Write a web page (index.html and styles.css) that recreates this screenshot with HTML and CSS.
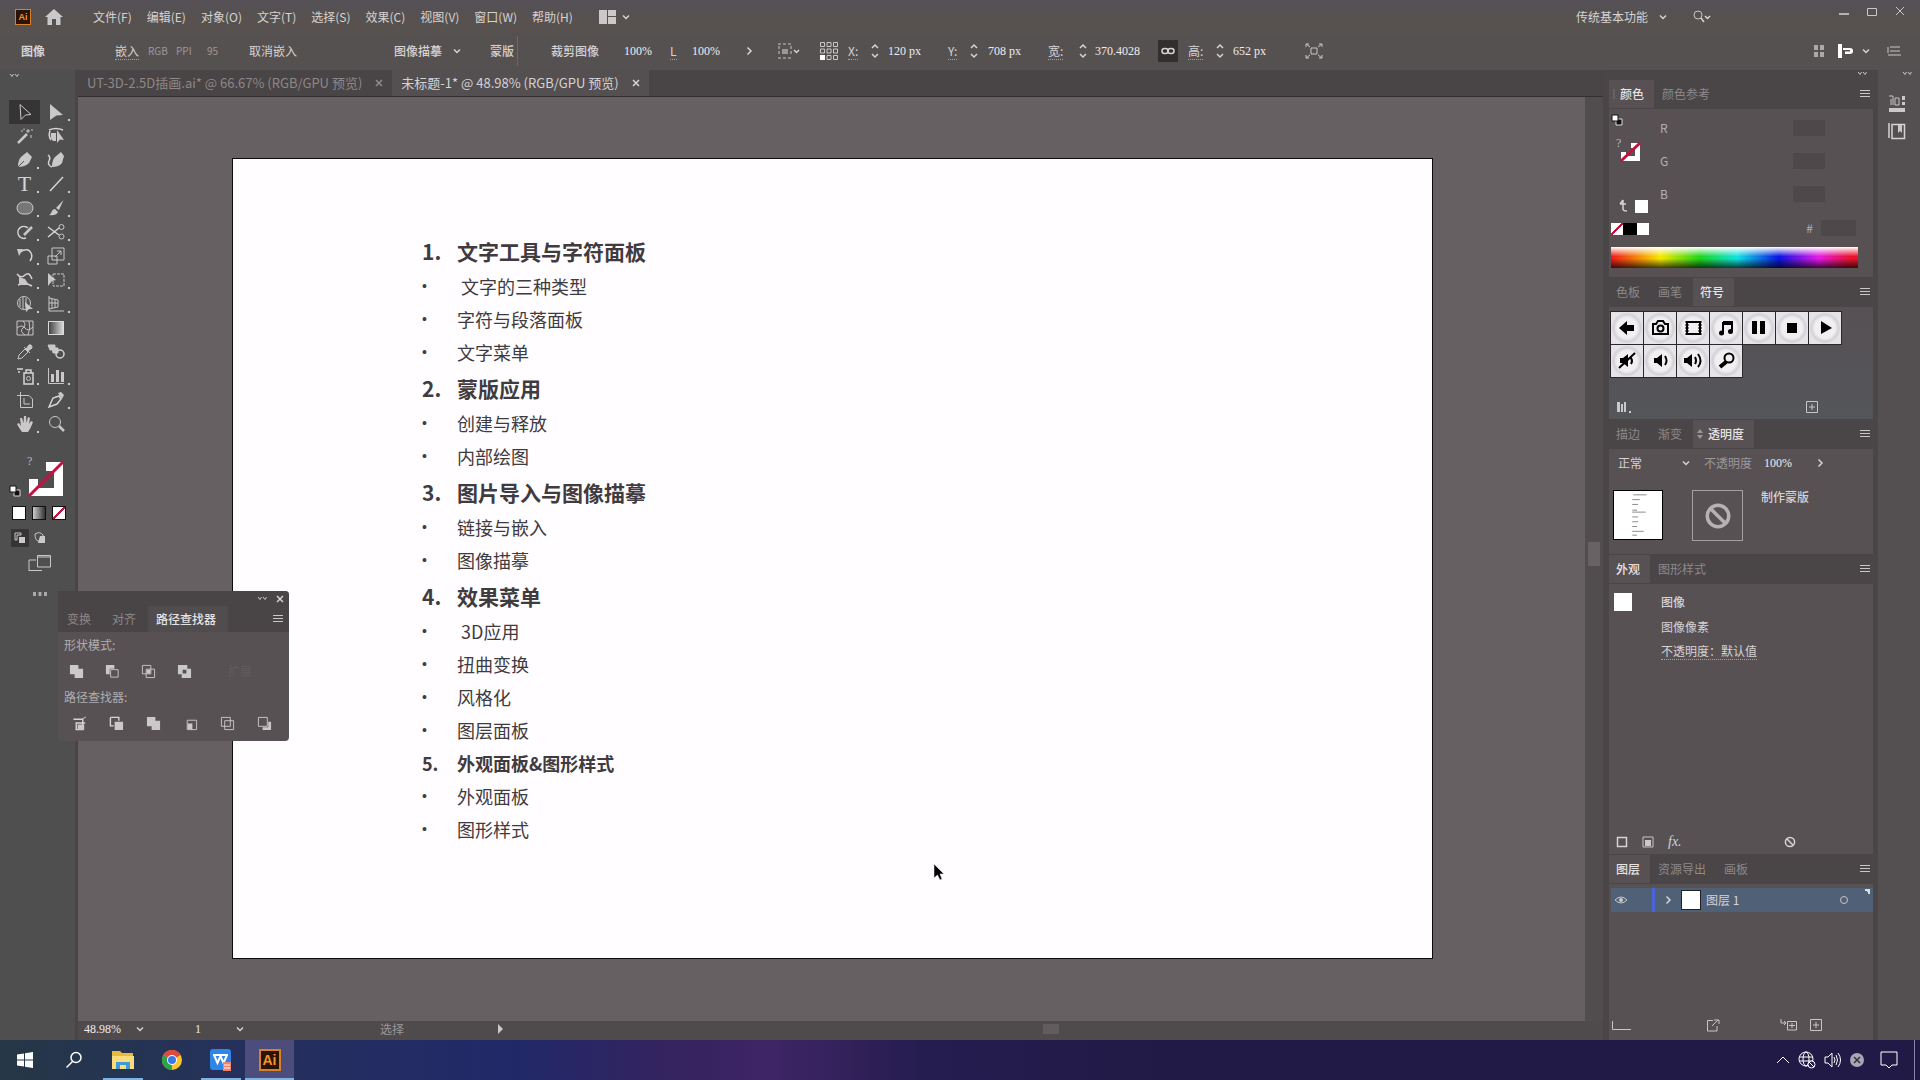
FILE: index.html
```html
<!DOCTYPE html>
<html lang="zh-CN">
<head>
<meta charset="utf-8">
<title>未标题-1* @ 48.98% (RGB/GPU 预览)</title>
<meta name="viewport" content="width=device-width, initial-scale=1">
<link rel="stylesheet" href="styles.css">
</head>
<body>
<svg class="defs" aria-hidden="true">
  <symbol id="chev" viewBox="0 0 10 10"><path d="M2 3.5 5 6.5 8 3.5" class="ln2"/></symbol>
  <symbol id="next" viewBox="0 0 10 10"><path d="M3.5 1.5 7 5 3.5 8.5" class="ln2"/></symbol>
  <symbol id="spin" viewBox="0 0 10 16"><path d="M2 5 5 2 8 5M2 11 5 14 8 11" class="ln2"/></symbol>
  <symbol id="grip" viewBox="0 0 6 10"><path d="M0 4 3 0 6 4ZM0 6 3 10 6 6Z" fill="#9a9596"/></symbol>
  <symbol id="lines" viewBox="0 0 12 12"><path d="M1 2.5H11M1 5.5H11M1 8.5H11" class="ln"/></symbol>
  <symbol id="close" viewBox="0 0 10 10"><path d="M2 2 8 8M8 2 2 8" class="ln2"/></symbol>
  <symbol id="collapse" viewBox="0 0 10 8"><path d="M1 2 3 4.5 4.5 2M6 2 8 4.5 9.5 2" class="ln"/></symbol>
  <symbol id="plusbox" viewBox="0 0 12 12"><path d="M.5.5H11.5V11.5H.5ZM6 3V9M3 6H9" class="ln"/></symbol>
  <symbol id="forbid" viewBox="0 0 12 12"><circle cx="6" cy="6" r="4.6" class="ln2"/><path d="M2.8 2.8 9.2 9.2" class="ln2"/></symbol>
  <symbol id="default" viewBox="0 0 12 12"><path d="M5 5H11V11H5Z" fill="#111" stroke="#ddd"/><path d="M1 1H7V7H1Z" fill="#fff" stroke="#111"/></symbol>

  <symbol id="t-select" viewBox="0 0 18 18"><path d="M4 1.5 15 11.5 9.5 12 5 16.5Z" class="ln"/></symbol>
  <symbol id="t-direct" viewBox="0 0 18 18"><path d="M3 1 16 12 9.5 12.500 3 17Z" class="fl"/></symbol>
  <symbol id="t-wand" viewBox="0 0 18 18"><path d="M2 16 11 7" class="ln3"/><path d="M12 2V6M10 4H14M6 3V5M15 8V11M8 1.500V3M16 2V4" class="ln"/></symbol>
  <symbol id="t-lasso" viewBox="0 0 18 18"><path d="M2 3Q9 0 16 3M3 4Q1 9 4 13" class="ln2"/><path d="M4 6H9V14H6Q3 11 4 6Z" class="fl"/><path d="M10 3 17 13 13 12.500 10 16Z" class="fl"/></symbol>
  <symbol id="t-pen" viewBox="0 0 18 18"><path d="M2 16Q2 9 5 6L11 1 16 6 13 12Q9 16 2 16Z" class="fl"/><path d="M2 16 8 10" stroke="#555"/></symbol>
  <symbol id="t-curve" viewBox="0 0 18 18"><path d="M5 16Q5 9 8 6L14 1 17 5 15 12Q12 16 5 16Z" class="fl"/><path d="M1 4Q4 6 2 10T5 16" class="ln2"/></symbol>
  <symbol id="t-line" viewBox="0 0 18 18"><path d="M3 16 16 2" class="ln2"/></symbol>
  <symbol id="t-ellipse" viewBox="0 0 18 18"><rect x="1" y="3" width="16" height="12" rx="6" fill="#777" stroke="#ccc"/></symbol>
  <symbol id="t-brush" viewBox="0 0 18 18"><path d="M16.500 1 12 11 9 9ZM8 10 11 13Q9 17 2 16 4 15 5 12 6 10 8 10Z" class="fl"/></symbol>
  <symbol id="t-shaper" viewBox="0 0 18 18"><path d="M10 15A6 6 0 1 1 12 5" class="ln2"/><path d="M8 12 16 4" class="ln3"/></symbol>
  <symbol id="t-scissors" viewBox="0 0 18 18"><path d="M1 4 12 12M1 14 12 5" class="ln2"/><circle cx="14.500" cy="4" r="2.500" class="ln"/><circle cx="14.500" cy="13.500" r="2.500" class="ln"/></symbol>
  <symbol id="t-rotate" viewBox="0 0 18 18"><path d="M4 5Q12 0 15 6 17 10 14 14" class="ln2"/><path d="M1 2 7 2 3 9Z" class="fl"/></symbol>
  <symbol id="t-scale" viewBox="0 0 18 18"><path d="M5 1H17V13H5ZM1 9H10V17H1ZM8 10 14 4M10 4H14V8" class="ln"/></symbol>
  <symbol id="t-width" viewBox="0 0 18 18"><path d="M1 3Q5 8 9 4T16 8M2 14Q9 11 16 15" class="ln2"/><path d="M3 6 9 8 13 14 3 14Z" class="fl"/></symbol>
  <symbol id="t-free" viewBox="0 0 18 18"><path d="M6 3H17V15H6Z" class="ln" stroke-dasharray="3 1"/><path d="M1 2 9 9 5 10 1 15Z" class="fl"/></symbol>
  <symbol id="t-builder" viewBox="0 0 18 18"><circle cx="8" cy="8" r="6.500" class="ln"/><path d="M4 4V12M7 2V14M10 3V12" class="ln"/><path d="M9 7 17 14 13 14 10 17Z" class="fl"/></symbol>
  <symbol id="t-persp" viewBox="0 0 18 18"><path d="M2 1V16H17M2 3 11 5V12L2 14M5 4V13M8 4V13M2 8H11" class="ln"/></symbol>
  <symbol id="t-mesh" viewBox="0 0 18 18"><path d="M1 2H17V16H1ZM1 9Q6 5 9 9T17 8M7 2Q11 6 7 9T9 16M13 2Q15 9 12 16" class="ln"/></symbol>
  <linearGradient id="grad"><stop offset="0" stop-color="#3f3f3f"/><stop offset="1" stop-color="#ddd"/></linearGradient>
  <symbol id="t-gradient" viewBox="0 0 18 18"><path d="M1.500 2.500H16.500V15.500H1.500Z" fill="url(#grad)" stroke="#ddd"/></symbol>
  <symbol id="t-eyedrop" viewBox="0 0 18 18"><path d="M2 16 3 12 9 6 12 9 6 15Z" class="ln"/><path d="M8 4 14 10M10 6 13 2Q16 1 16 5L12 8Z" class="lf"/></symbol>
  <symbol id="t-blend" viewBox="0 0 18 18"><path d="M1 2H8V7H3ZM5 5H11V10H6Z" class="lf"/><circle cx="13" cy="11" r="4" class="ln2"/></symbol>
  <symbol id="t-spray" viewBox="0 0 18 18"><path d="M8 6H17V17H8ZM10 6V3H15V6M1 2H7M2 5H4" class="ln2"/><circle cx="12.500" cy="11.500" r="2" class="ln"/></symbol>
  <symbol id="t-graph" viewBox="0 0 18 18"><path d="M1.500 1V16.500H17" class="ln"/><path d="M4 7H7V15H4ZM9 3H12V15H9ZM14 5H17V15H14Z" class="fl"/></symbol>
  <symbol id="t-artboard" viewBox="0 0 18 18"><path d="M4.500 1V16.500H16.500V8L13 4.500H1M8 7V13M8 13H14" class="ln"/></symbol>
  <symbol id="t-slice" viewBox="0 0 18 18"><path d="M2 16 6 7 12 5 14 8 10 13Z" class="ln2"/><path d="M11 2 14 1 17 4 15 8Z" class="fl"/></symbol>
  <symbol id="t-hand" viewBox="0 0 18 18"><path d="M6 17Q3 13 1 9L3 8 5 11 4 3H6L7.500 8 8 1H10L10.500 8 12 2 14 3 13 9 15 6 17 7Q15 13 12 17Z" class="fl"/></symbol>
  <symbol id="t-zoom" viewBox="0 0 18 18"><circle cx="8" cy="7" r="5.500" class="ln"/><path d="M12 11 17 16" class="ln3"/></symbol>

  <symbol id="p-unite" viewBox="0 0 16 16"><path d="M1 1H10V5H15V15H6V11H1Z" class="fl"/></symbol>
  <symbol id="p-minus" viewBox="0 0 16 16"><path d="M1 1H10V5H5V11H1Z" class="fl"/><path d="M6 6H14V14H6Z" class="ln"/></symbol>
  <symbol id="p-inter" viewBox="0 0 16 16"><path d="M1.500 1.500H10.500V10.500H1.500ZM5.500 5.500H14.500V14.500H5.500Z" class="ln"/><path d="M6 6H10V10H6Z" class="fl"/></symbol>
  <symbol id="p-excl" viewBox="0 0 16 16"><path d="M1 1H11V5H15V15H5V11H1ZM6 6V10H10V6Z" fill-rule="evenodd" class="fl"/></symbol>
  <symbol id="p-divide" viewBox="0 0 16 16"><path d="M1.500 3.500H11.500V14.500H4.500V7.500H14" class="ln2"/><path d="M6 9H13V15H6Z" class="fl"/><path d="M11 3 15 1" class="ln"/></symbol>
  <symbol id="p-trim" viewBox="0 0 16 16"><path d="M1.500 1.500H10.500V5M1.500 1.500V10.500H5" class="ln2"/><path d="M6 6H15V15H6Z" class="fl"/></symbol>
  <symbol id="p-crop" viewBox="0 0 16 16"><path d="M4.500 4.500H14.500V14.500H4.500Z" class="ln"/><path d="M5 8H10V14H5Z" class="fl"/></symbol>
  <symbol id="p-outline" viewBox="0 0 16 16"><path d="M1.500 1.500H11V11H1.500ZM5 5H14.500V14.500H5Z" class="ln"/></symbol>
  <symbol id="p-back" viewBox="0 0 16 16"><path d="M1.500 1.500H11V11H1.500Z" class="ln"/><path d="M12 6H15V15H6V12H12Z" class="fl"/></symbol>
</svg>

<div class="app">
  <header class="menubar">
    <span class="ai-logo small">Ai</span>
    <button class="plain home" aria-label="主页"><svg width="18" height="16" viewBox="0 0 18 16"><path d="M9 0 18 8H15.500V16H11V10H7V16H2.500V8H0Z" class="fl"/></svg></button>
    <nav class="menus">
      <button class="plain">文件(F)</button><button class="plain">编辑(E)</button><button class="plain">对象(O)</button><button class="plain">文字(T)</button><button class="plain">选择(S)</button><button class="plain">效果(C)</button><button class="plain">视图(V)</button><button class="plain">窗口(W)</button><button class="plain">帮助(H)</button>
    </nav>
    <button class="plain arrange" aria-label="排列文档"><svg width="17" height="14" viewBox="0 0 17 14"><path d="M0 0H8V14H0ZM9 0H17V6H9ZM9 7H17V14H9Z" class="fl"/></svg><svg width="10" height="10"><use href="#chev"/></svg></button>
    <button class="plain workspace">传统基本功能<svg width="10" height="10"><use href="#chev"/></svg></button>
    <button class="plain search" aria-label="搜索"><svg width="20" height="14" viewBox="0 0 20 14"><circle cx="6" cy="5" r="4" class="ln"/><path d="M9 8 12 12M13 6 15.500 8.500 18 6" class="ln2"/></svg></button>
    <div class="winctl">
      <button class="plain" aria-label="最小化"><svg width="12" height="12" viewBox="0 0 12 12"><path d="M1 8H11" class="ln2"/></svg></button>
      <button class="plain" aria-label="还原"><svg width="12" height="12" viewBox="0 0 12 12"><path d="M1.500 2.500H10.500V9.500H1.500Z" class="ln"/></svg></button>
      <button class="plain" aria-label="关闭"><svg width="12" height="12" viewBox="0 0 12 12"><path d="M2 1 10 9M10 1 2 9" class="ln"/></svg></button>
    </div>
  </header>

  <div class="options">
    <b>图像</b>
    <a href="#" class="dotted">嵌入</a>
    <span class="dim meta">RGB</span>
    <span class="dim meta">PPI</span>
    <span class="dim meta">95</span>
    <button class="plain">取消嵌入</button>
    <button class="plain strong">图像描摹</button>
    <button class="plain" aria-label="描摹预设"><svg width="10" height="10"><use href="#chev"/></svg></button>
    <button class="plain strong">蒙版</button>
    <span class="divider"></span>
    <button class="plain strong">裁剪图像</button>
    <input class="num" aria-label="缩放" value="100%">
    <label class="dotted" for="op">L</label>
    <input class="num" id="op" value="100%">
    <button class="plain" aria-label="更多"><svg width="10" height="10"><use href="#next"/></svg></button>
    <button class="plain" aria-label="对齐"><svg width="24" height="18" viewBox="0 0 24 18"><path d="M1 2H15M1 16H15M2 4V14M14 4V14" class="ln" stroke-dasharray="3 2"/><path d="M5 7H11V12H5Z" fill="#999"/><path d="M17 8 19.500 10.500 22 8" class="ln2"/></svg></button>
    <button class="plain" aria-label="参考点"><svg width="20" height="20" viewBox="0 0 20 20"><path d="M1.500 1.500H5.500V5.500H1.500ZM8 1.500H12V5.500H8ZM14.500 1.500H18.500V5.500H14.500ZM1.500 8H5.500V12H1.500ZM8 8H12V12H8ZM14.500 8H18.500V12H14.500ZM8 14.500H12V18.500H8ZM14.500 14.500H18.500V18.500H14.500Z" class="ln"/><path d="M1 14H6V19H1Z" fill="#fff"/></svg></button>
    <label class="dotted" for="px">X:</label>
    <svg width="10" height="16"><use href="#spin"/></svg>
    <input class="num" id="px" value="120 px">
    <label class="dotted" for="py">Y:</label>
    <svg width="10" height="16"><use href="#spin"/></svg>
    <input class="num" id="py" value="708 px">
    <label class="dotted" for="pw">宽:</label>
    <svg width="10" height="16"><use href="#spin"/></svg>
    <input class="num" id="pw" value="370.4028">
    <button class="plain link" aria-label="约束比例"><svg width="14" height="8" viewBox="0 0 14 8"><rect x="1" y="1.500" width="6" height="5" rx="2.500" class="ln2"/><rect x="7" y="1.500" width="6" height="5" rx="2.500" class="ln2"/></svg></button>
    <label class="dotted" for="ph">高:</label>
    <svg width="10" height="16"><use href="#spin"/></svg>
    <input class="num" id="ph" value="652 px">
    <button class="plain" aria-label="隔离"><svg width="18" height="16" viewBox="0 0 18 16"><path d="M6 5H12V11H6ZM1 4V1H4M1 1 5 4M14 1H17V4M17 1 13 4M1 12V15H4M1 15 5 12M14 15H17V12M17 15 13 12" class="ln"/></svg></button>
    <button class="plain" aria-label="网格"><svg width="12" height="14" viewBox="0 0 12 14"><path d="M1 1H5V6H1ZM7 1H11V6H7ZM1 8H5V13H1ZM7 8H11V13H7Z" fill="#aaa"/></svg></button>
    <button class="plain" aria-label="停靠"><svg width="17" height="16" viewBox="0 0 17 16"><path d="M1 1H5V15H1ZM6 5H13Q16 5 16 8T13 11H8V8.500H13V7H6Z" fill="#fff"/></svg></button>
    <button class="plain" aria-label="展开"><svg width="10" height="10"><use href="#chev"/></svg></button>
    <button class="plain" aria-label="面板菜单"><svg width="14" height="12" viewBox="0 0 14 12"><path d="M3 2H13M3 6H13M1 10H14M1 2V8" class="ln"/></svg></button>
  </div>

  <main class="main">
    <aside class="toolbar">
      <svg class="tool-collapse" width="10" height="8"><use href="#collapse"/></svg>
      <div class="tools">
        <button class="plain on" aria-label="选择"><svg><use href="#t-select"/></svg></button><button class="plain more" aria-label="直接选择"><svg><use href="#t-direct"/></svg></button>
        <button class="plain" aria-label="魔棒"><svg><use href="#t-wand"/></svg></button><button class="plain" aria-label="套索"><svg><use href="#t-lasso"/></svg></button>
        <button class="plain more" aria-label="钢笔"><svg><use href="#t-pen"/></svg></button><button class="plain" aria-label="曲率"><svg><use href="#t-curve"/></svg></button>
        <button class="plain more type">T</button><button class="plain more" aria-label="直线段"><svg><use href="#t-line"/></svg></button>
        <button class="plain more" aria-label="椭圆"><svg><use href="#t-ellipse"/></svg></button><button class="plain more" aria-label="画笔"><svg><use href="#t-brush"/></svg></button>
        <button class="plain more" aria-label="整形"><svg><use href="#t-shaper"/></svg></button><button class="plain more" aria-label="剪刀"><svg><use href="#t-scissors"/></svg></button>
        <button class="plain more" aria-label="旋转"><svg><use href="#t-rotate"/></svg></button><button class="plain more" aria-label="比例缩放"><svg><use href="#t-scale"/></svg></button>
        <button class="plain more" aria-label="宽度"><svg><use href="#t-width"/></svg></button><button class="plain more" aria-label="自由变换"><svg><use href="#t-free"/></svg></button>
        <button class="plain more" aria-label="形状生成器"><svg><use href="#t-builder"/></svg></button><button class="plain more" aria-label="透视网格"><svg><use href="#t-persp"/></svg></button>
        <button class="plain" aria-label="网格"><svg><use href="#t-mesh"/></svg></button><button class="plain" aria-label="渐变"><svg><use href="#t-gradient"/></svg></button>
        <button class="plain more" aria-label="吸管"><svg><use href="#t-eyedrop"/></svg></button><button class="plain" aria-label="混合"><svg><use href="#t-blend"/></svg></button>
        <button class="plain more" aria-label="符号喷枪"><svg><use href="#t-spray"/></svg></button><button class="plain more" aria-label="柱形图"><svg><use href="#t-graph"/></svg></button>
        <button class="plain" aria-label="画板"><svg><use href="#t-artboard"/></svg></button><button class="plain more" aria-label="切片"><svg><use href="#t-slice"/></svg></button>
        <button class="plain more" aria-label="抓手"><svg><use href="#t-hand"/></svg></button><button class="plain" aria-label="缩放"><svg><use href="#t-zoom"/></svg></button>
      </div>
      <div class="fillstroke">
        <svg width="12" height="12"><use href="#default"/></svg>
        <svg width="38" height="44" viewBox="0 -2 38 44"><path d="M19 7H36V41H2V24H11V33H27V16H19Z" fill="#fff"/><path d="M2 41 36 7" stroke="#c3123f" stroke-width="3"/><text x="0" y="10" class="q">?</text></svg>
      </div>
      <div class="modes">
        <button class="plain sw white" aria-label="颜色"></button><button class="plain sw grad" aria-label="渐变"></button><button class="plain sw none" aria-label="无"></button>
      </div>
      <div class="draw">
        <button class="plain on" aria-label="正常绘图"><svg width="12" height="12" viewBox="0 0 12 12"><path d="M1 1H7V3H3V8H1Z" class="ln"/><path d="M5 5H11V11H5Z" class="fl"/></svg></button>
        <button class="plain" aria-label="背面绘图"><svg width="12" height="12" viewBox="0 0 12 12"><path d="M1 2Q6-1 9 3V9H4Q1 8 1 2Z" class="ln"/><path d="M6 4H11V11H4Z" class="fl"/></svg></button>
      </div>
      <button class="plain screen" aria-label="屏幕模式"><svg width="24" height="18" viewBox="0 0 24 18"><path d="M1 17V6H8M1 16.500H14M9.500 1.500H22.500V13H9.500ZM9.500 3H22.500" class="ln"/></svg></button>
      <button class="plain dots" aria-label="编辑工具栏"><svg width="16" height="4" viewBox="0 0 16 4"><path d="M1 0H4V4H1ZM6.500 0H9.500V4H6.500ZM12 0H15V4H12Z" fill="#aaa"/></svg></button>
    </aside>

    <section class="document">
      <div class="doctabs">
        <div class="doctab">UT-3D-2.5D插画.ai* @ 66.67% (RGB/GPU 预览)<button class="plain" aria-label="关闭标签"><svg width="10" height="10"><use href="#close"/></svg></button></div>
        <div class="doctab current">未标题-1* @ 48.98% (RGB/GPU 预览)<button class="plain" aria-label="关闭标签"><svg width="10" height="10"><use href="#close"/></svg></button></div>
      </div>
      <div class="view">
        <div class="canvas">
          <article class="artboard">
            <ul class="outline">
              <li class="head"><span>1.</span>文字工具与字符面板</li>
              <li><span>•</span> 文字的三种类型</li>
              <li><span>•</span>字符与段落面板</li>
              <li><span>•</span>文字菜单</li>
              <li class="head"><span>2.</span>蒙版应用</li>
              <li><span>•</span>创建与释放</li>
              <li><span>•</span>内部绘图</li>
              <li class="head"><span>3.</span>图片导入与图像描摹</li>
              <li><span>•</span>链接与嵌入</li>
              <li><span>•</span>图像描摹</li>
              <li class="head"><span>4.</span>效果菜单</li>
              <li><span>•</span> 3D应用</li>
              <li><span>•</span>扭曲变换</li>
              <li><span>•</span>风格化</li>
              <li><span>•</span>图层面板</li>
              <li class="subhead"><span>5.</span>外观面板&amp;图形样式</li>
              <li><span>•</span>外观面板</li>
              <li><span>•</span>图形样式</li>
            </ul>
          </article>
          <svg class="cursor" width="12" height="18" viewBox="0 0 12 18"><path d="M1 1V15L4.500 12 7 17 9 16 7 11H11Z" fill="#000" stroke="#fff" stroke-width=".5"/></svg>
        </div>
        <div class="vscroll"><span></span></div>
      </div>
      <div class="status">
        <input class="num" aria-label="显示比例" value="48.98%">
        <svg width="10" height="10"><use href="#chev"/></svg>
        <input class="num" aria-label="画板编号" value="1">
        <svg width="10" height="10"><use href="#chev"/></svg>
        <span class="dim">选择</span>
        <svg width="8" height="10" viewBox="0 0 8 10"><path d="M1 0 6 5 1 10Z" class="fl"/></svg>
        <div class="hscroll"><span></span></div>
      </div>
    </section>

    <aside class="dock">
      <div class="docktop"><svg width="10" height="8"><use href="#collapse"/></svg></div>

      <div class="ptabs"><button class="plain cur grip"><svg width="2" height="10" viewBox="0 0 2 10"><path d="M1 0V10" stroke="#777"/></svg>颜色</button><button class="plain">颜色参考</button><svg width="12" height="12"><use href="#lines"/></svg></div>
      <div class="color">
        <div class="colorcols">
          <div class="cleft">
            <div class="c1"><svg width="12" height="12"><use href="#default"/></svg></div>
            <div class="c2"><svg width="36" height="36" viewBox="0 -5 36 36"><path d="M20 4H29V22H10V13H15V17H24V9H20Z" fill="#fff"/><path d="M10 22 29 4" stroke="#c3123f" stroke-width="3"/><text x="5" y="8" class="q">?</text></svg></div>
            <div class="c3"><svg width="14" height="14" viewBox="0 0 14 14"><path d="M6 1V10Q6 12 10 12M3 5H9M3 5 6 1" class="ln2"/></svg><i class="wsw"></i></div>
            <div class="c4"><i class="none"></i><i class="black"></i><i class="white"></i></div>
          </div>
          <div class="cright">
            <label>R<input class="cnum"></label>
            <label>G<input class="cnum"></label>
            <label>B<input class="cnum"></label>
            <label class="hex">#<input class="cnum"></label>
          </div>
        </div>
        <div class="spectrum"></div>
      </div>

      <div class="ptabs"><button class="plain">色板</button><button class="plain">画笔</button><button class="plain cur">符号</button><svg width="12" height="12"><use href="#lines"/></svg></div>
      <div class="symbols">
        <div class="symgrid">
          <button aria-label="后退"><svg viewBox="0 0 32 32"><path d="M8 16 16 9V13H23V19H16V23Z"/></svg></button>
          <button aria-label="相机"><svg viewBox="0 0 32 32"><path d="M9 12H12L14 9H19L21 12H24V22H9Z" class="sk"/><circle cx="16.500" cy="16.500" r="3" class="sk"/></svg></button>
          <button aria-label="影片"><svg viewBox="0 0 32 32"><path d="M10 10H23V22H10Z" class="sk"/><path d="M10 9V23M23 9V23" stroke="#000" stroke-width="3" stroke-dasharray="2 1"/></svg></button>
          <button aria-label="音乐"><svg viewBox="0 0 32 32"><path d="M13 21V11H22V19" class="sk"/><path d="M13 9H23V13H13Z"/><circle cx="11.500" cy="21" r="2.500"/><circle cx="20.500" cy="19.500" r="2.500"/></svg></button>
          <button aria-label="暂停"><svg viewBox="0 0 32 32"><path d="M9 9H14V22H9ZM17 9H22V22H17Z"/></svg></button>
          <button aria-label="停止"><svg viewBox="0 0 32 32"><path d="M11 11H21V21H11Z"/></svg></button>
          <button aria-label="播放"><svg viewBox="0 0 32 32"><path d="M12 9 23 16 12 22Z"/></svg></button>
          <button aria-label="静音"><svg viewBox="0 0 32 32"><path d="M9 13H12L17 9V22L12 18H9Z"/><path d="M8 23 24 8M20 13Q22 16 20 19" class="sk"/></svg></button>
          <button aria-label="小音量"><svg viewBox="0 0 32 32"><path d="M10 13H13L18 9V22L13 18H10Z"/><path d="M21 11Q24 16 21 20" class="sk"/></svg></button>
          <button aria-label="大音量"><svg viewBox="0 0 32 32"><path d="M7 13H10L15 9V22L10 18H7Z"/><path d="M18 12Q20 16 18 19M21 9Q26 16 21 22" class="sk"/></svg></button>
          <button aria-label="查找"><svg viewBox="0 0 32 32"><circle cx="19" cy="13" r="4.500" class="sk"/><path d="M16 17 10 22" stroke="#000" stroke-width="4"/></svg></button>
        </div>
        <div class="pfoot sym"><svg width="16" height="12" viewBox="0 0 16 12"><path d="M1 1H4V11H1ZM5 3H7V11H5ZM8 1H10V11H8ZM13 10H15V12H13Z" class="fl"/></svg><svg width="12" height="12"><use href="#plusbox"/></svg></div>
      </div>

      <div class="ptabs"><button class="plain">描边</button><button class="plain">渐变</button><button class="plain cur grip"><svg width="6" height="10"><use href="#grip"/></svg>透明度</button><svg width="12" height="12"><use href="#lines"/></svg></div>
      <div class="transp">
        <div class="blend"><button class="plain">正常<svg width="10" height="10"><use href="#chev"/></svg></button><label for="topa">不透明度</label><input class="num" id="topa" value="100%"><svg width="10" height="10"><use href="#next"/></svg></div>
        <div class="mask">
          <svg class="thumb" width="50" height="50" viewBox="0 0 50 50"><path d="M20 4H34M19 9H27M19 14H25M19 20H24M19 22H33M19 27H25M19 32H25M19 37H24M19 42H31M19 46H24" stroke="#888"/></svg>
          <div class="nomask"><svg width="28" height="28"><use href="#forbid"/></svg></div>
          <button class="plain strong">制作蒙版</button>
        </div>
      </div>

      <div class="ptabs"><button class="plain cur">外观</button><button class="plain">图形样式</button><svg width="12" height="12"><use href="#lines"/></svg></div>
      <div class="appear">
        <div class="arow"><i class="sq"></i><b>图像</b></div>
        <div class="arow"><i></i><span>图像像素</span></div>
        <div class="arow"><i></i><a href="#" class="dotted">不透明度：默认值</a></div>
        <div class="pfoot app-foot"><svg width="12" height="12" viewBox="0 0 12 12"><path d="M1.500 1.500H10.500V10.500H1.500Z" class="ln2"/></svg><svg width="12" height="12" viewBox="0 0 12 12"><path d="M1 1H11V11H1Z" class="ln"/><path d="M3 4H9V10H3Z" class="fl"/></svg><span class="fx">fx.</span><svg width="12" height="12"><use href="#forbid"/></svg></div>
      </div>

      <div class="ptabs"><button class="plain cur">图层</button><button class="plain">资源导出</button><button class="plain">画板</button><svg width="12" height="12"><use href="#lines"/></svg></div>
      <div class="layers">
        <div class="layer"><svg width="14" height="10" viewBox="0 0 14 10"><path d="M1 5Q7-1 13 5 7 11 1 5Z" class="ln"/><circle cx="7" cy="5" r="2" class="fl"/></svg><i class="bar"></i><svg width="10" height="10"><use href="#next"/></svg><i class="lthumb"></i><span>图层 1</span><svg width="10" height="10" viewBox="0 0 10 10"><circle cx="5" cy="5" r="3.500" class="ln"/></svg><i class="corner"></i></div>
        <div class="pfoot lay-foot"><svg width="20" height="12" viewBox="0 0 20 12"><path d="M1.500 2V10.500H20" class="ln"/></svg><svg width="14" height="13" viewBox="0 0 14 13"><path d="M7 1.500H1.500V12H11V7M6 7 12 1M8 1H13V5" class="ln"/></svg><svg width="18" height="12" viewBox="0 0 18 12"><path d="M1 0V4H6M4 2 6 4 4 6M7.500 2.500H16.500V11H7.500ZM12 4V9M9 6.500H15" class="ln"/></svg><svg width="12" height="12"><use href="#plusbox"/></svg></div>
      </div>
    </aside>

    <aside class="rail">
      <svg width="10" height="8"><use href="#collapse"/></svg>
      <button class="plain" aria-label="属性"><svg width="18" height="18" viewBox="0 0 18 18"><path d="M1 1H5V10M3 4V10M7 3H11V10H7Z" class="ln"/><path d="M14 1H17V5H14ZM14 7H17V10H14ZM1 13H17V17H1Z" class="fl"/></svg></button>
      <button class="plain" aria-label="库"><svg width="18" height="18" viewBox="0 0 18 18"><path d="M1 1V16M4 2.500H16.500V16.500H4Z" class="ln2"/><path d="M10 3H14V11L12 9 10 11Z" class="fl"/></svg></button>
    </aside>

    <section class="pathfinder">
      <div class="pf-head">
        <div class="pf-ctl"><svg width="10" height="8"><use href="#collapse"/></svg><svg width="10" height="10"><use href="#close"/></svg></div>
        <div class="pf-tabs"><button class="plain">变换</button><button class="plain">对齐</button><button class="plain cur">路径查找器</button><svg width="12" height="12"><use href="#lines"/></svg></div>
      </div>
      <div class="pf-body">
        <p>形状模式:</p>
        <div class="pf-row shape"><button class="plain" aria-label="联集"><svg><use href="#p-unite"/></svg></button><button class="plain" aria-label="减去顶层"><svg><use href="#p-minus"/></svg></button><button class="plain" aria-label="交集"><svg><use href="#p-inter"/></svg></button><button class="plain" aria-label="差集"><svg><use href="#p-excl"/></svg></button><button class="plain expand" disabled>扩展</button></div>
        <p>路径查找器:</p>
        <div class="pf-row"><button class="plain" aria-label="分割"><svg><use href="#p-divide"/></svg></button><button class="plain" aria-label="修边"><svg><use href="#p-trim"/></svg></button><button class="plain" aria-label="合并"><svg><use href="#p-unite"/></svg></button><button class="plain" aria-label="裁剪"><svg><use href="#p-crop"/></svg></button><button class="plain" aria-label="轮廓"><svg><use href="#p-outline"/></svg></button><button class="plain" aria-label="减去后方"><svg><use href="#p-back"/></svg></button></div>
      </div>
    </section>
  </main>

  <footer class="taskbar">
    <button class="plain" aria-label="开始"><svg width="16" height="16" viewBox="0 0 16 16"><path d="M0 2.500 7 1.500V7.500H0ZM8 1.300 16 0V7.500H8ZM0 8.500H7V14.500L0 13.500ZM8 8.500H16V16L8 14.700Z" fill="#fff"/></svg></button>
    <button class="plain" aria-label="搜索"><svg width="18" height="18" viewBox="0 0 18 18"><circle cx="11" cy="6.500" r="5" fill="none" stroke="#fff" stroke-width="1.500"/><path d="M7.500 10.500 1.500 16.500" stroke="#fff" stroke-width="1.500"/></svg></button>
    <button class="plain open" aria-label="文件资源管理器"><svg width="22" height="20" viewBox="0 0 22 20"><path d="M0 1H8L10 3H21V19H0Z" fill="#e9b83d"/><path d="M0 6H22V19H0Z" fill="#fbdc7c"/><path d="M4 12H18V19H14V15H8V19H4Z" fill="#3f9ad8"/></svg></button>
    <button class="plain" aria-label="Chrome"><svg width="22" height="22" viewBox="0 0 22 22"><circle cx="11" cy="11" r="10" fill="#f7c630"/><path d="M11 11 2.340 6A10 10 0 0 1 19.660 6Z" fill="#dd4b3e"/><path d="M11 11 2.340 6A10 10 0 0 0 11 21Z" fill="#2ba24c"/><circle cx="11" cy="11" r="5" fill="#fff"/><circle cx="11" cy="11" r="4" fill="#3b78e7"/></svg></button>
    <button class="plain open" aria-label="WPS"><svg width="22" height="22" viewBox="0 0 22 22"><rect width="21" height="21" rx="3" fill="#2f86e8"/><path d="M3 6H18M4 6 7.500 14 10.500 7 13.500 14 17 6" fill="none" stroke="#fff" stroke-width="2"/><path d="M13 13H21V22H13Z" fill="#f0836d"/><path d="M14 16H20M14 19H20" stroke="#fff"/></svg></button>
    <button class="plain active" aria-label="Illustrator"><span class="ai-logo">Ai</span></button>
    <div class="tray">
      <svg width="14" height="10" viewBox="0 0 14 10"><path d="M1 8 7 2 13 8" class="tk"/></svg>
      <svg width="18" height="18" viewBox="0 0 18 18"><circle cx="8" cy="8" r="7" class="tk"/><ellipse cx="8" cy="8" rx="3" ry="7" class="tk"/><path d="M1 6H15M1 10H15" class="tk"/><circle cx="13.500" cy="13.500" r="3.500" fill="#241b49" stroke="#fff"/><path d="M11 11 16 16" class="tk"/></svg>
      <svg width="18" height="16" viewBox="0 0 18 16"><path d="M1 5H4L8 1V15L4 11H1ZM10 5Q12 8 10 11M12 3Q15 8 12 13M14 1Q19 8 14 15" class="tk"/></svg>
      <svg width="14" height="14" viewBox="0 0 14 14"><circle cx="7" cy="7" r="7" fill="#a9a5b8"/><path d="M4 4 10 10M10 4 4 10" stroke="#333" stroke-width="1.500"/></svg>
      <svg width="18" height="18" viewBox="0 0 18 18"><path d="M1 1H17V14H12L9 17 6 14H1Z" class="tk"/></svg>
      <i class="peek"></i>
    </div>
  </footer>
</div>
</body>
</html>
```

FILE: styles.css
```css
* { box-sizing: border-box; }

body {
  margin: 0;
  background: #4d484a;
  color: #d6d2d3;
  font: 12px/16px "Noto Sans CJK SC", sans-serif;
}

.defs { position: absolute; width: 0; height: 0; }
svg { display: block; flex: none; }
.ln { fill: none; stroke: #c9c6c7; stroke-width: 1; }
.ln2 { fill: none; stroke: #d6d3d4; stroke-width: 1.5; }
.ln3 { fill: none; stroke: #c9c6c7; stroke-width: 2.5; }
.lf { fill: #c9c6c7; stroke: #c9c6c7; stroke-width: 1; }
.fl { fill: #cbc8c9; }
.tk { fill: none; stroke: #fff; stroke-width: 1; }
.q { font: 12px "Liberation Serif", serif; fill: #bbb; }
i { display: block; flex: none; }

.plain {
  margin: 0;
  padding: 0;
  border: 0;
  background: none;
  color: inherit;
  font: inherit;
  white-space: nowrap;
  text-align: left;
}
.strong { font-weight: 500; }
.dim { color: #9c9798; }
.meta { font-size: 10px; }
.dotted {
  justify-self: start;
  color: inherit;
  text-decoration: none;
  border-bottom: 1px dotted #a5a0a1;
}
.num {
  width: 100%;
  min-width: 0;
  padding: 0;
  border: 0;
  background: none;
  color: #efedee;
  font: 12px/16px "Liberation Serif", serif;
}

.app { display: flex; flex-direction: column; height: 100vh; min-height: 800px; }

/* menu bar */
.menubar {
  display: flex;
  align-items: center;
  height: 34px;
  padding-left: 15px;
  background: linear-gradient(#545056, #57524f 60%);
}
.ai-logo {
  display: grid;
  place-items: center;
  width: 22px;
  height: 22px;
  border: 2px solid #d9802a;
  background: #2b1405;
  color: #f5932c;
  font: bold 14px/16px "Liberation Sans", sans-serif;
}
.ai-logo.small { width: 16px; height: 16px; border-width: 1px; font-size: 9px; line-height: 12px; }
.home { margin: 0 30px 0 14px; }
.menus { display: flex; gap: 15px; }
.arrange { display: flex; align-items: center; gap: 5px; margin-left: 26px; }
.workspace { display: flex; align-items: center; gap: 10px; margin-left: auto; }
.search { margin: 0 126px 0 24px; }
.winctl { display: flex; gap: 16px; padding: 0 14px 10px 0; }

/* control bar */
.options {
  display: grid;
  grid-template-columns: 94px 33px 28px 31px 42px 145px 58px 38px 27px 34px 73px 46px 22px 52px 33px 42px 29px 22px 18px 60px 21px 19px 60px 30px 17px 63px 30px 27px 18px 72px 1fr 24px 24px 26px 33px;
  align-items: center;
  height: 36px;
  padding: 0 0 2px 21px;
  background: #565151;
}
.divider { width: 1px; height: 30px; background: #6d6868; }
.link { display: grid; place-items: center; width: 20px; height: 22px; background: #332e2f; }

.main { position: relative; display: flex; flex: 1; min-height: 0; }

/* tools */
.toolbar {
  display: flex;
  flex-direction: column;
  width: 78px;
  padding: 0 0 0 9px;
  border-right: 3px solid #494546;
  background: #504f50;
}
.tool-collapse { margin: 2px 0 20px; }
.tools { display: grid; grid-template-columns: 31px 31px; grid-auto-rows: 24px; }
.tools .plain { position: relative; display: grid; place-items: center; }
.tools svg { width: 18px; height: 18px; }
.tools .on, .draw .on { background: #363435; }
.tools .more::after {
  content: "";
  position: absolute;
  right: 1px;
  bottom: 3px;
  width: 2px;
  height: 2px;
  background: #ccc;
}
.tools .type { font: 22px/24px "Liberation Serif", serif; }
.fillstroke { display: flex; align-items: flex-end; gap: 6px; margin-top: 17px; }
.modes { display: flex; gap: 6px; margin: 9px 0 0 3px; }
.sw { width: 14px; height: 14px; border: 1px solid #111; }
.white { background: #fff; }
.black { background: #000; }
.grad { background: linear-gradient(90deg, #ccc, #333); }
.none { background: linear-gradient(135deg, #fff 42%, #c3123f 42% 58%, #fff 58%); }
.modes .none, .c4 .none { background: linear-gradient(to bottom right, #fff 42%, #c3123f 42% 58%, #fff 58%); }
.draw { display: flex; gap: 2px; margin: 9px 0 0 2px; }
.draw .plain { display: grid; place-items: center; width: 18px; height: 18px; }
.screen { margin: 7px 0 0 19px; align-self: flex-start; }
.dots { margin: 20px 0 0 23px; align-self: flex-start; }

/* document window */
.document { display: flex; flex-direction: column; flex: 1; min-width: 0; }
.doctabs { display: flex; height: 27px; border-bottom: 1px solid #332e30; background: #494445; }
.doctab { display: flex; align-items: center; gap: 12px; padding: 0 8px 0 9px; color: #8d8889; font-size: 13px; white-space: nowrap; }
.doctab .plain { opacity: .5; }
.doctab.current { background: #544f50; color: #d6d2d3; }
.doctab.current .plain { opacity: 1; }
.view { display: flex; flex: 1; min-height: 0; }
.canvas { position: relative; display: flex; flex: 1; min-width: 0; padding: 61px 152px 62px 154px; background: #666063; }
.artboard { flex: 1; min-width: 0; padding: 73px 0 0 189px; border: 1px solid #0d0b0c; background: #fffdff; overflow: hidden; }
.outline { margin: 0; padding: 0; list-style: none; color: #403b3e; }
.outline li { display: flex; font-size: 18px; line-height: 33px; white-space: pre; }
.outline span { flex: none; width: 35px; }
.outline li:not(.head):not(.subhead) span { font: 14px/33px "Liberation Sans", sans-serif; }
.outline .head { font-size: 21px; line-height: 38px; font-weight: 700; }
.outline .subhead { font-weight: 700; }
.cursor { position: absolute; left: 855px; top: 766px; }
.vscroll { display: flex; align-items: center; justify-content: center; width: 18px; background: #514c4e; }
.vscroll span { width: 12px; height: 24px; margin-top: -10px; background: #686265; }
.status {
  display: grid;
  grid-template-columns: 51px 60px 40px 145px 117px 20px 1fr;
  align-items: center;
  height: 19px;
  padding: 0 18px 4px 6px;
  background: #4f4a4c;
}
.hscroll { display: flex; justify-content: center; height: 10px; }
.hscroll span { width: 16px; background: #625c5f; }

/* panel dock */
.dock {
  display: flex;
  flex-direction: column;
  width: 275px;
  padding: 0 5px 0 6px;
  background: #4a4547;
}
.docktop { display: flex; justify-content: flex-end; height: 9px; padding-right: 6px; }
.ptabs { display: flex; align-items: center; flex: none; height: 30px; color: #8d8889; background: #4a4547; }
.ptabs .plain { padding: 0 10px 0 7px; margin-right: 1px; line-height: 28px; }
.ptabs .cur { color: #e6e3e4; background: #575154; font-weight: 500; }
.ptabs > svg { margin: 0 2px 0 auto; }
.ptabs .grip { display: flex; align-items: center; gap: 5px; padding-left: 4px; }
.color, .symbols, .transp, .appear, .layers { padding: 0 0 0 2px; background: #575154; }
.color { height: 168px; }
.colorcols { display: flex; height: 138px; }
.cleft { width: 46px; }
.c1, .c2 { display: flex; align-items: center; }
.c1 { height: 22px; }
.c2 { height: 42px; }
.c3 { display: flex; align-items: flex-end; gap: 4px; height: 40px; padding-left: 6px; }
.wsw { width: 13px; height: 13px; background: #fff; }
.c4 { display: flex; margin-top: 10px; }
.c4 i { width: 12px; height: 12px; }
.c4 .black { width: 14px; }
.cright { flex: 1; padding-top: 2px; }
.cright label { display: flex; align-items: center; justify-content: space-between; height: 33px; padding: 0 48px 0 3px; color: #b5b0b2; }
.cnum { width: 32px; height: 16px; border: 0; background: #4d484a; }
.cright .hex { justify-content: flex-end; gap: 8px; height: 36px; padding-right: 17px; }
.hex .cnum { width: 35px; }
.spectrum {
  height: 21px;
  margin-right: 15px;
  background:
    linear-gradient(#fff 0, #fff0 45%, #0000 55%, #000b 100%),
    linear-gradient(90deg, #f01818, #f6e800 20%, #1dd61d 36%, #12e3e3 51%, #0a14e0 68%, #e61ae6 84%, #e8132a 97%);
}
.symbols { display: flex; flex-direction: column; height: 112px; padding-top: 5px; background: linear-gradient(#575154, #54565a); }
.symgrid { display: grid; grid-template-columns: repeat(7, 32px); grid-auto-rows: 32px; gap: 1px; }
.symgrid button {
  padding: 0;
  border: 0;
  outline: 1px solid #2c282a;
  background: radial-gradient(circle, #f1eff2 45%, #d3d1d5 60%, #e6e4e8 70%);
}
.symgrid .sk { fill: none; stroke: #000; stroke-width: 2; }
.pfoot { display: flex; align-items: center; margin-top: auto; }
.sym { gap: 174px; height: 22px; padding: 0 0 2px 5px; }
.transp { height: 105px; }
.blend { display: grid; grid-template-columns: 86px 60px 51px 1fr; align-items: center; height: 28px; padding-left: 7px; }
.blend .plain { display: flex; align-items: center; justify-content: space-between; padding-right: 13px; }
.blend label { color: #9c9798; }
.mask { display: flex; align-items: flex-start; padding: 13px 0 0 2px; }
.thumb { border: 1px solid #000; background: #fff; }
.mask .plain { line-height: 14px; }
.nomask { display: grid; place-items: center; width: 51px; height: 51px; margin: 0 18px 0 29px; border: 1px solid #bdb9ba; opacity: .75; }
.appear { display: flex; flex-direction: column; flex: 1; min-height: 0; padding-top: 5px; }
.arow { display: flex; align-items: center; gap: 29px; height: 25px; padding-left: 3px; }
.arow b { font-weight: 500; }
.arow i { width: 18px; height: 18px; }
.arow .sq { background: #fff; }
.app-foot { gap: 14px; height: 24px; padding-left: 5px; }
.fx { font: italic 14px/16px "Liberation Serif", serif; }
.app-foot svg:last-child { margin-left: 88px; }
.layers { display: flex; flex-direction: column; height: 156px; padding-top: 4px; }
.layer { position: relative; display: grid; grid-template-columns: 38px 11px 19px 24px 1fr 34px; align-items: center; height: 24px; padding-left: 3px; background: #4f6077; }
.bar { width: 3px; height: 24px; background: #4c62d8; }
.lthumb { width: 18px; height: 18px; outline: 1px solid #222; background: #fff; }
.corner { position: absolute; right: 3px; top: 1px; width: 6px; height: 6px; background: linear-gradient(45deg, transparent 50%, #ddd 50%); }
.lay-foot { height: 30px; }
.lay-foot svg:nth-child(2) { margin-left: 75px; }
.lay-foot svg:nth-child(3) { margin-left: 60px; }
.lay-foot svg:nth-child(4) { margin-left: 12px; }

.rail { display: flex; flex-direction: column; align-items: flex-start; gap: 9px; width: 42px; padding-left: 10px; background: #544f51; }
.rail > svg { align-self: flex-end; margin: 0 8px 8px 0; }

/* floating pathfinder panel, over the canvas */
.pathfinder { position: absolute; left: 58px; top: 521px; width: 231px; border-radius: 0 4px 4px 4px; overflow: hidden; background: #575154; }
.pf-head { background: #494446; }
.pf-ctl { display: flex; align-items: center; justify-content: flex-end; gap: 8px; height: 15px; padding-right: 4px; }
.pf-tabs { display: flex; align-items: center; height: 26px; color: #8d8889; }
.pf-tabs .plain { padding: 0 12px 0 9px; line-height: 26px; }
.pf-tabs .cur { padding-left: 8px; color: #e6e3e4; font-weight: 500; background: #514c4e; }
.pf-tabs svg { margin: 0 5px 0 auto; }
.pf-body { padding: 5px 0 0 6px; }
.pf-body p { margin: 0; color: #b1adae; }
.pf-row { display: flex; height: 36px; align-items: center; }
.pf-row .plain { width: 37px; padding-left: 8px; }
.pf-row.shape .plain { width: 36px; padding-left: 5px; }
.pf-row svg { width: 15px; height: 15px; }
.pf-row.shape .expand { width: 56px; padding-left: 20px; color: #625c5f; }

/* task bar */
.taskbar {
  display: flex;
  height: 40px;
  background: linear-gradient(90deg, #263746, #25315c 12%, #212868 27%, #34235f 35%, #3f2566 40%, #251d50 48%, #221a46 60%);
}
.taskbar > .plain { display: grid; place-items: center; width: 49px; }
.taskbar .open { background: linear-gradient(#7fb4e0, #7fb4e0) center bottom / 40px 2px no-repeat; }
.taskbar .active { background: linear-gradient(#7fb4e0, #7fb4e0) bottom / 100% 2px no-repeat #4d4d7c; }
.tray { display: flex; align-items: center; gap: 8px; margin-left: auto; padding-right: 5px; }
.tray svg:nth-child(5) { margin-left: 8px; }
.peek { width: 1px; height: 40px; margin-left: 8px; background: #8a84a8; }
```
